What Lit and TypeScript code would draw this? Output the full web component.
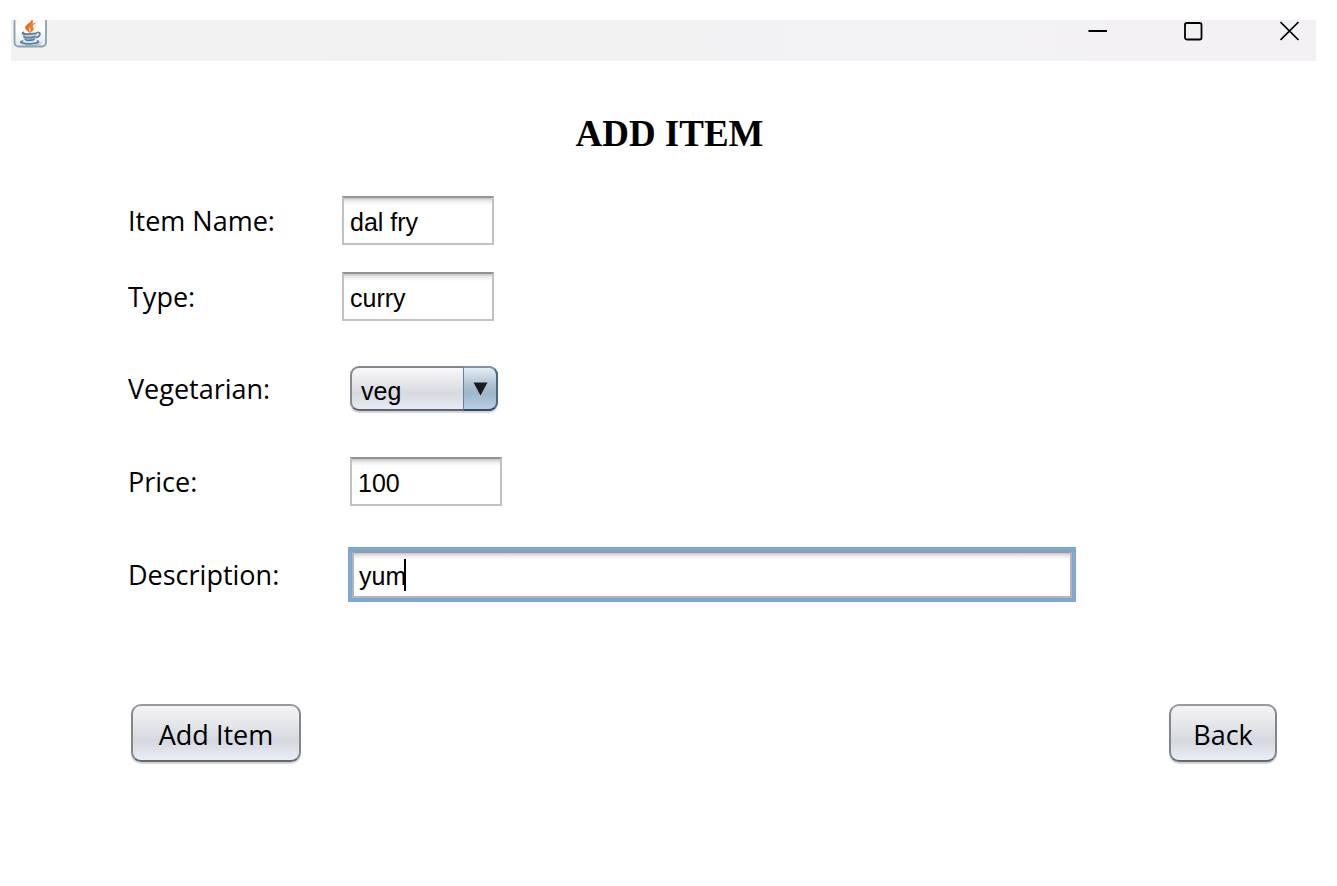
import { LitElement, html, css } from "lit";
import { customElement } from "lit/decorators.js";

@customElement("title-bar")
class TitleBar extends LitElement {
  static styles = css`
    :host {
      display: flex;
      justify-content: space-between;
      align-items: flex-start;
      height: 41px;
      background: linear-gradient(90deg, #f2f2f2, #f3f1f4);
      overflow: hidden;
    }
    svg {
      display: block;
    }
    .logo {
      margin-left: 2px;
    }
    .controls {
      display: flex;
      gap: 56px;
      padding-right: 6px;
    }
    button {
      width: 40px;
      height: 22px;
      padding: 0;
      border: 0;
      background: none;
      display: flex;
      justify-content: center;
    }
  `;

  render() {
    return html`
      <svg class="logo" width="35" height="28" viewBox="0 0 35 28" fill="none" aria-hidden="true">
        <defs>
          <linearGradient id="tile" x1="0" y1="0" x2="0" y2="1">
            <stop offset="0" stop-color="#f4f4f4" />
            <stop offset="0.5" stop-color="#ffffff" />
            <stop offset="1" stop-color="#e4e6e9" />
          </linearGradient>
        </defs>
        <rect x="1.5" y="-8" width="31.5" height="34.500" rx="4" fill="url(#tile)" stroke="#86a0b2" stroke-width="1.8" />
        <path d="M18.500 -1C20 3 12 4 12.500 8C13 10 15 11 16.500 12.500C16 9.500 14.500 8.500 18 5C20 3 20 1 18.500 -1Z" fill="#e8701c" stroke="#e8701c" stroke-width="0.8" />
        <path d="M22.500 3C18 4 16 6 17 8C18 9.500 18 11 17 12.500C20.500 11 21 9 20 7.500C19 6 20 4.500 22.500 3Z" fill="#ec7d2c" stroke="#ec7d2c" stroke-width="0.5" />
        <path d="M9 13.500C13 15 19 15 24 13.500C24 17 22 20.500 20 21.500H13C11 20 9.500 17 9 13.500Z" fill="#b9cbd8" />
        <g stroke="#57809f" stroke-width="1.8" stroke-linecap="round">
          <path d="M10.500 12.500C7 14 13 14.700 23 13.300" />
          <path d="M11 16.500C11.500 18 17 18 22 16.800" />
          <path d="M12.500 19.300C12.500 20.500 17 20.700 21 19.500" />
          <path d="M24 12.500C28 11.500 28 16 23.500 17.500" />
          <path d="M9.500 21C4 22.500 12 24.500 19 23.700C25 23 27 22 24.500 21" />
          <path d="M13 25.500C19 26 26 25 28 23" stroke-width="1" stroke="#9cb2c2" />
        </g>
      </svg>
      <div class="controls">
        <button type="button" aria-label="Minimize">
          <svg width="20" height="22" viewBox="0 0 20 22"><path d="M0.500 11H19" stroke="#000" stroke-width="2" /></svg>
        </button>
        <button type="button" aria-label="Maximize">
          <svg width="20" height="22" viewBox="0 0 20 22"><rect x="1" y="3" width="16.500" height="16.500" rx="1.800" fill="none" stroke="#000" stroke-width="1.8" /></svg>
        </button>
        <button type="button" aria-label="Close">
          <svg width="20" height="22" viewBox="0 0 20 22"><path d="M0.500 2L18.500 20M18.500 2L0.500 20" stroke="#000" stroke-width="1.700" /></svg>
        </button>
      </div>
    `;
  }
}

@customElement("app-root")
class AppRoot extends LitElement {
  static styles = css`
    :host {
      display: block;
      min-height: 100vh;
      box-sizing: border-box;
      padding: 20px 21px 48px 11px;
      background: #fff;
      color: #000;
      font-family: "Open Sans", "Noto Sans", sans-serif;
      font-size: 27px;
    }
    * {
      box-sizing: border-box;
    }
    h1 {
      margin: 52px 0 41px;
      padding-left: 12px;
      text-align: center;
      font: bold 37px/42px "Liberation Serif", serif;
    }
    form {
      padding: 0 39px 0 117px;
    }
    .row {
      display: flex;
      align-items: center;
      margin-bottom: 45px;
    }
    .row.tight {
      margin-bottom: 27px;
    }
    .row.wide {
      padding-right: 201px;
      margin: -4px 0 102px;
    }
    .row label {
      flex: none;
      width: 214px;
      line-height: 36px;
    }
    .row.indent label {
      width: 222px;
    }
    .row.wide label {
      width: 220px;
    }
    input,
    select {
      font: 25px/30px "Liberation Sans", sans-serif;
      color: #000;
      border-radius: 0;
      outline: 0;
    }
    input {
      width: 152px;
      height: 49px;
      padding: 3px 6px 0;
      border: 2px solid #c2c2c4;
      border-top-color: #929396;
      background: linear-gradient(#c6c6c8, #ececee 3px, #fff 7px);
    }
    .focus {
      position: relative;
      flex: 1;
      border: 4px solid #7ea8d3;
    }
    .focus input {
      display: block;
      width: 100%;
      height: 47px;
      padding: 3px 5px 0;
      border-color: #b4b5b8;
      border-top-color: #96989b;
      caret-color: transparent;
    }
    .caret {
      position: absolute;
      left: 52px;
      top: 8px;
      width: 2px;
      height: 32px;
      background: #000;
    }
    .select {
      position: relative;
      width: 148px;
      height: 46px;
    }
    select {
      appearance: none;
      display: block;
      width: 100%;
      height: 45px;
      padding: 4px 40px 0 9px;
      border: 2px solid #85888f;
      border-bottom-color: #60646b;
      border-radius: 9px;
      background: linear-gradient(#f8f8fa, #e4e5e9 40%, #d6d9df 62%, #e8ecf4);
      box-shadow: 0 2px 1px #d4d4d6;
    }
    .arrow {
      position: absolute;
      right: 0;
      top: 0;
      width: 35px;
      height: 45px;
      border: 2px solid #4d6680;
      border-top-color: #7f93a7;
      border-left: 1px solid #6c8299;
      border-bottom-color: #304b66;
      border-radius: 0 9px 9px 0;
      background: linear-gradient(#e6edf3, #b0c3d4 40%, #a0b6ca 62%, #b9cfe6);
      pointer-events: none;
    }
    .arrow svg {
      display: block;
      margin: 14px 0 0 9px;
    }
    .actions {
      display: flex;
      justify-content: space-between;
      padding-left: 3px;
    }
    .actions button {
      height: 58px;
      padding: 4px 22px 0;
      border: 2px solid #83878c;
      border-top-color: #989c9f;
      border-bottom-color: #65696f;
      border-radius: 10px;
      background: linear-gradient(#f4f4f6, #e3e4e8 40%, #d5d8df 65%, #eaeef6);
      box-shadow: 0 2px 1px #d4d4d6;
      color: #000;
      font: inherit;
      line-height: 36px;
    }
    .actions .add {
      min-width: 170px;
    }
    .actions .back {
      min-width: 108px;
    }
  `;

  render() {
    return html`
      <title-bar></title-bar>
      <h1>ADD ITEM</h1>
      <form @submit=${(e: Event) => e.preventDefault()}>
        <div class="row tight">
          <label for="name">Item Name:</label>
          <input id="name" type="text" .value=${"dal fry"} />
        </div>
        <div class="row">
          <label for="type">Type:</label>
          <input id="type" type="text" .value=${"curry"} />
        </div>
        <div class="row indent">
          <label for="veg">Vegetarian:</label>
          <div class="select">
            <select id="veg">
              <option>veg</option>
              <option>non-veg</option>
            </select>
            <span class="arrow">
              <svg width="15" height="14" viewBox="0 0 15 14" aria-hidden="true"><path d="M0.500 0.500H14.500L7.500 13.500Z" fill="#191b1e" /></svg>
            </span>
          </div>
        </div>
        <div class="row indent">
          <label for="price">Price:</label>
          <input id="price" type="text" .value=${"100"} />
        </div>
        <div class="row wide">
          <label for="desc">Description:</label>
          <div class="focus">
            <input id="desc" type="text" .value=${"yum"} />
            <span class="caret"></span>
          </div>
        </div>
        <div class="actions">
          <button class="add" type="submit">Add Item</button>
          <button class="back" type="button">Back</button>
        </div>
      </form>
    `;
  }
}
